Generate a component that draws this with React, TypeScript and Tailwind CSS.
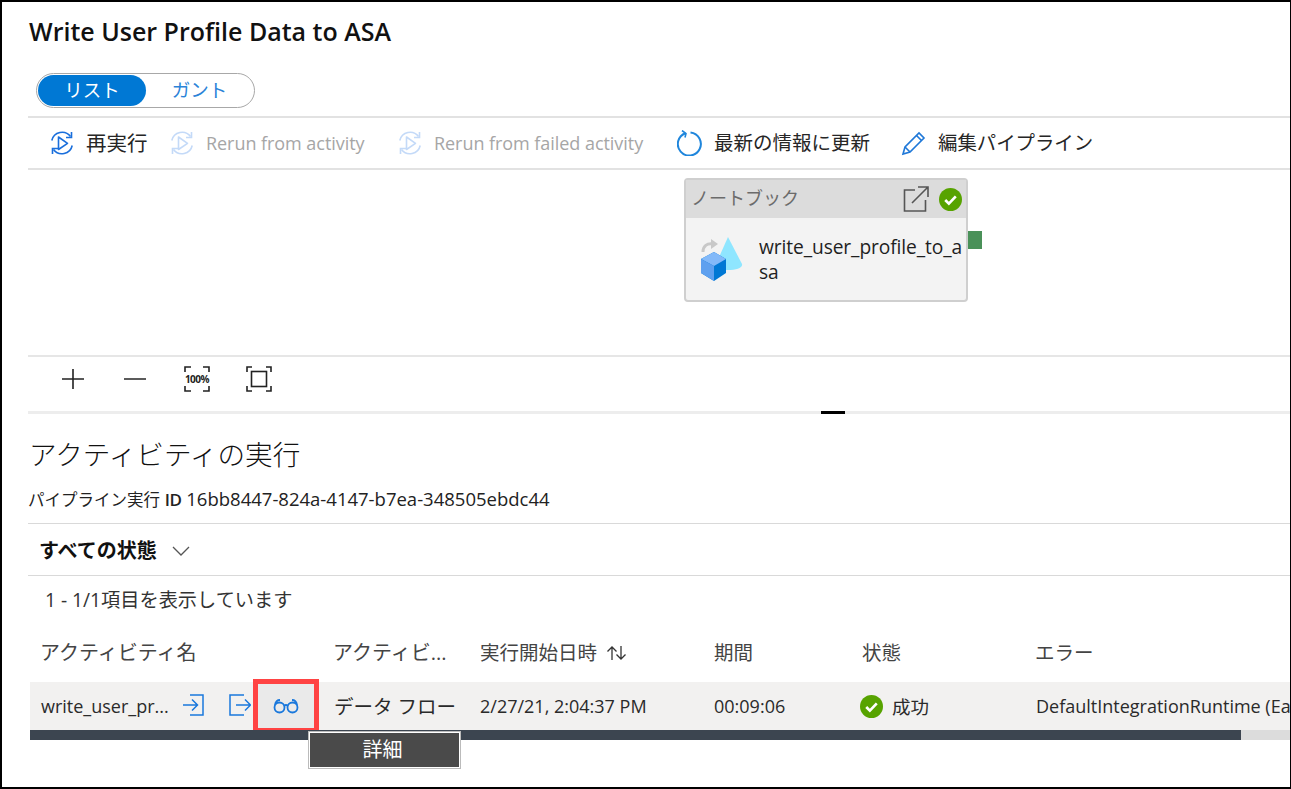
const font = "font-['Open_Sans','Noto_Sans_CJK_JP',sans-serif]";

function RerunIcon({ faded }: { faded?: boolean }) {
  return (
    <svg width="26" height="26" viewBox="0 0 26 26" fill="none" stroke={faded ? "#c4daf8" : "#1a6fdc"} strokeWidth="1.6">
      <path d="M2.8 10.5A10.5 10.5 0 0 1 21.5 6.5" />
      <path d="M22.5 2v5.5H17" />
      <path d="M23.2 15.5A10.5 10.5 0 0 1 4.5 19.5" />
      <path d="M3.5 24v-5.5H9" />
      <path d="M9.5 7v12.5l9-6.2z" strokeLinejoin="round" />
    </svg>
  );
}

function CheckCircle({ size }: { size: number }) {
  return (
    <svg width={size} height={size} viewBox="0 0 24 24">
      <circle cx="12" cy="12" r="12" fill="#57a300" />
      <path d="M6.5 12.5l3.8 3.8 7.2-7.6" fill="none" stroke="#fff" strokeWidth="2.8" />
    </svg>
  );
}

function ToolbarButton({ icon, label, muted, width, textClass }: { icon: React.ReactNode; label: string; muted?: boolean; width: string; textClass: string }) {
  return (
    <div className={`flex items-center gap-[11px] ${width}`}>
      {icon}
      <span className={`whitespace-nowrap ${textClass} ${muted ? "text-[#a6a6a6]" : "text-[#262626]"}`}>{label}</span>
    </div>
  );
}

function NotebookNode() {
  return (
    <div className="absolute left-[656px] top-[8px] w-[284px] h-[124px] rounded-[4px] border-2 border-[#cfcfcf] bg-[#f3f3f3]">
      <div className="flex items-center justify-between h-[38px] pl-[5px] pr-[4px] bg-[#dcdcdc]">
        <span className="pb-[2px] text-[18px] text-[#6b6b6b]">ノートブック</span>
        <div className="flex items-center gap-[10px]">
          <svg width="26" height="26" viewBox="0 0 26 26" fill="none" stroke="#555" strokeWidth="1.6">
            <path d="M12 4H1.5v21h21V14" />
            <path d="M9 17L25 1M15 1h10v10" />
          </svg>
          <CheckCircle size={23} />
        </div>
      </div>
      <div className="flex items-start pl-[14px] pt-[16px]">
        <svg width="46" height="46" viewBox="0 0 46 46" className="mt-[3px] shrink-0">
          <path d="M3 15c0-6 4-9 10-8" fill="none" stroke="#c8c8c8" strokeWidth="3" />
          <path d="M11 2l7 5-7 5z" fill="#c8c8c8" />
          <path d="M28 0l14 27c1 4-6 6-14 6s-12-2-12-6z" fill="#8fe6ff" />
          <path d="M14 15l12 7v14l-12 8-13-8V22z" fill="#0078d4" />
          <path d="M14 15l12 7-12 7-13-7z" fill="#83b9f9" />
          <path d="M1 22l13 7v15L1 36z" fill="#5ea0ef" />
        </svg>
        <div className="ml-[13px] w-[208px] break-all text-[19.2px] leading-[25px] text-[#1f1f1f] tracking-[-0.1px]">
          write_user_profile_to_asa
        </div>
      </div>
      <div className="absolute -right-[16px] top-[51px] w-[14px] h-[18px] bg-[#4a9159]" />
    </div>
  );
}

function ZoomBar() {
  return (
    <div className="flex items-start h-[54px] pt-[9px] pl-[32px] gap-[36px]">
      <svg width="26" height="26" viewBox="0 0 26 26" stroke="#222" strokeWidth="1.6"><path d="M13 3v20M2 13h22" /></svg>
      <svg width="26" height="26" viewBox="0 0 26 26" stroke="#333" strokeWidth="1.6"><path d="M2 13h22" /></svg>
      <div className="relative w-[26px] h-[26px]">
        <svg width="26" height="26" viewBox="0 0 26 26" fill="none" stroke="#222" strokeWidth="1.6"><path d="M1 6V1h6M19 1h6v5M25 20v5h-6M7 25H1v-5" /></svg>
        <span className="absolute inset-0 flex items-center justify-center text-[10px] font-bold text-[#222] tracking-[-0.5px]">100%</span>
      </div>
      <svg width="26" height="26" viewBox="0 0 26 26" fill="none" stroke="#222" strokeWidth="1.6">
        <path d="M1 6V1h5M20 1h5v5M25 20v5h-5M6 25H1v-5" />
        <rect x="5.5" y="5.5" width="15" height="15" />
      </svg>
    </div>
  );
}

function RowIcons() {
  return (
    <>
      <svg width="22" height="22" viewBox="0 0 22 22" fill="none" stroke="#1a78dc" strokeWidth="1.5" className="absolute left-[153px] top-[12px]">
        <path d="M7 1h13v20H7M0 11h14M9 5.5l5.5 5.5L9 16.5" />
      </svg>
      <svg width="22" height="22" viewBox="0 0 22 22" fill="none" stroke="#1a78dc" strokeWidth="1.5" className="absolute left-[199px] top-[12px]">
        <path d="M15 1H1v20h14M7 11h14.5M16 5.5l5.5 5.5-5.5 5.5" />
      </svg>
    </>
  );
}

export default function App() {
  return (
    <div className={`w-[1291px] h-[789px] overflow-hidden bg-white border-2 border-r border-black ${font}`}>
      <div className="pl-[26px]">
        <h1 className="h-[71px] pt-[11px] pl-[1px] text-[25px] leading-[36px] font-semibold text-[#111] whitespace-nowrap">
          Write User Profile Data to ASA
        </h1>

        <div className="flex w-[219px] h-[35px] ml-[8px] p-[1px] rounded-full border border-[#a8a8a8]">
          <div className="flex items-center justify-center w-[108px] pb-[2px] rounded-full bg-[#0078d4] text-[18.5px] text-white">リスト</div>
          <div className="flex items-center justify-center flex-1 pb-[2px] text-[18.5px] text-[#2a83d8]">ガント</div>
        </div>

        <div className="mt-[8px] flex items-center h-[54px] pl-[21px] border-y-2 border-y-[#e2e2e2]">
          <ToolbarButton icon={<RerunIcon />} label="再実行" width="w-[120px]" textClass="text-[20.5px]" />
          <ToolbarButton icon={<RerunIcon faded />} label="Rerun from activity" muted width="w-[228px]" textClass="text-[18px] tracking-[-0.05px]" />
          <ToolbarButton icon={<RerunIcon faded />} label="Rerun from failed activity" muted width="w-[280px]" textClass="text-[18px] tracking-[-0.05px]" />
          <ToolbarButton
            icon={
              <svg width="26" height="26" viewBox="0 0 26 26" fill="none" stroke="#1f86dc" strokeWidth="2">
                <path d="M8.5 3.2a11.5 11.5 0 1 0 5-0.6" />
                <path d="M5 0.5l4 3-1 4" strokeWidth="1.6" />
              </svg>
            }
            label="最新の情報に更新"
            width="w-[224px]"
            textClass="text-[19.5px]"
          />
          <ToolbarButton
            icon={
              <svg width="26" height="26" viewBox="0 0 26 26" fill="none" stroke="#1f78d8" strokeWidth="1.6">
                <path d="M2 24l2-7L18 3l5 5L9 22z" />
                <path d="M15.5 5.5l5 5M4 17l5 5" />
              </svg>
            }
            label="編集パイプライン"
            width="w-[220px]"
            textClass="text-[19.4px]"
          />
        </div>

        <div className="relative h-[185px]">
          <NotebookNode />
        </div>

        <div className="border-t-2 border-t-[#e6e6e6]">
          <ZoomBar />
        </div>
        <div className="relative h-[3px] bg-[#ededed]">
          <div className="absolute left-[793px] top-0 w-[24px] h-[3px] bg-black" />
        </div>

        <h2 className="h-[57px] pt-[20px] pl-[1px] text-[27.6px] leading-[40px] font-light text-[#111] whitespace-nowrap">アクティビティの実行</h2>

        <div className="h-[52px] pt-[16px] text-[18.5px] leading-[24px] text-[#222] whitespace-nowrap">
          <span className="text-[16.5px]">パイプライン実行</span> <span className="font-semibold text-[17px] tracking-[-0.5px]">ID</span> 16bb8447-824a-4147-b7ea-348505ebdc44
        </div>

        <div className="flex items-center gap-[15px] h-[53px] pt-[2px] pl-[11px] border-y border-y-[#d9d9d9]">
          <span className="text-[20px] font-bold text-[#111]">すべての状態</span>
          <svg width="18" height="12" viewBox="0 0 18 12" fill="none" stroke="#555" strokeWidth="1.3"><path d="M1 2l8 8 8-8" /></svg>
        </div>

        <div className="h-[46px] pt-[12px] pl-[17px] text-[19.2px] leading-[24px] text-[#333] whitespace-nowrap">1 - 1/1項目を表示しています</div>

        <div className="flex items-center h-[60px] pt-[2px] text-[20px] text-[#444] whitespace-nowrap">
          <div className="w-[305px] shrink-0 pl-[12px]">アクティビティ名</div>
          <div className="w-[147px] shrink-0">アクティビ...</div>
          <div className="w-[234px] shrink-0 flex items-center gap-[8px] text-[19.5px]">
            実行開始日時
            <svg width="24" height="18" viewBox="0 0 24 18" fill="none" stroke="#333" strokeWidth="1.3"><path d="M7 16V3M2.5 7.5L7 3l4.5 4.5M16 2v13M11.5 10.5L16 15l4.5-4.5" /></svg>
          </div>
          <div className="w-[148px] shrink-0 text-[19.5px]">期間</div>
          <div className="w-[173px] shrink-0 text-[19.5px]">状態</div>
          <div className="text-[19.5px]">エラー</div>
        </div>

        <div className="relative flex items-center ml-[2px] h-[48px] pt-[1px] bg-[#f2f1f0] text-[18px] text-[#2a2a2a] whitespace-nowrap">
          <div className="w-[304px] shrink-0 pl-[11px]">write_user_pr...</div>
          <RowIcons />
          <div className="absolute left-[223px] -top-[3px] w-[66px] h-[54px] border-[5px] border-[#ff4343] flex items-center justify-center bg-[#eaeaea]">
            <svg width="26" height="16" viewBox="0 0 26 16" fill="none" stroke="#1a78dc" strokeWidth="1.8">
              <circle cx="6.5" cy="9.5" r="5" />
              <circle cx="19.5" cy="9.5" r="5" />
              <path d="M11 8c1.2-1.2 2.8-1.2 4 0M2 7c.5-3 2-5 5-5M24 7c-.5-3-2-5-5-5" />
            </svg>
          </div>
          <div className="w-[146px] shrink-0 text-[19.5px]">データ フロー</div>
          <div className="w-[234px] shrink-0">2/27/21, 2:04:37 PM</div>
          <div className="w-[146px] shrink-0">00:09:06</div>
          <div className="w-[176px] shrink-0 flex items-center gap-[9px]">
            <CheckCircle size={23} />
            <span className="text-[18.5px]">成功</span>
          </div>
          <div>DefaultIntegrationRuntime (Ea</div>
        </div>

        <div className="relative h-[10px] ml-[2px] bg-[#dcdcdc]">
          <div className="w-[1211px] h-full bg-[#3c4550]" />
          <div className="absolute left-[279px] top-[2px] flex items-center justify-center w-[151px] h-[36px] pr-[4px] bg-[#4a4a4a] border border-white text-[20px] text-white shadow-[0_0_0_1px_#bbb]">
            詳細
          </div>
        </div>
      </div>
    </div>
  );
}
